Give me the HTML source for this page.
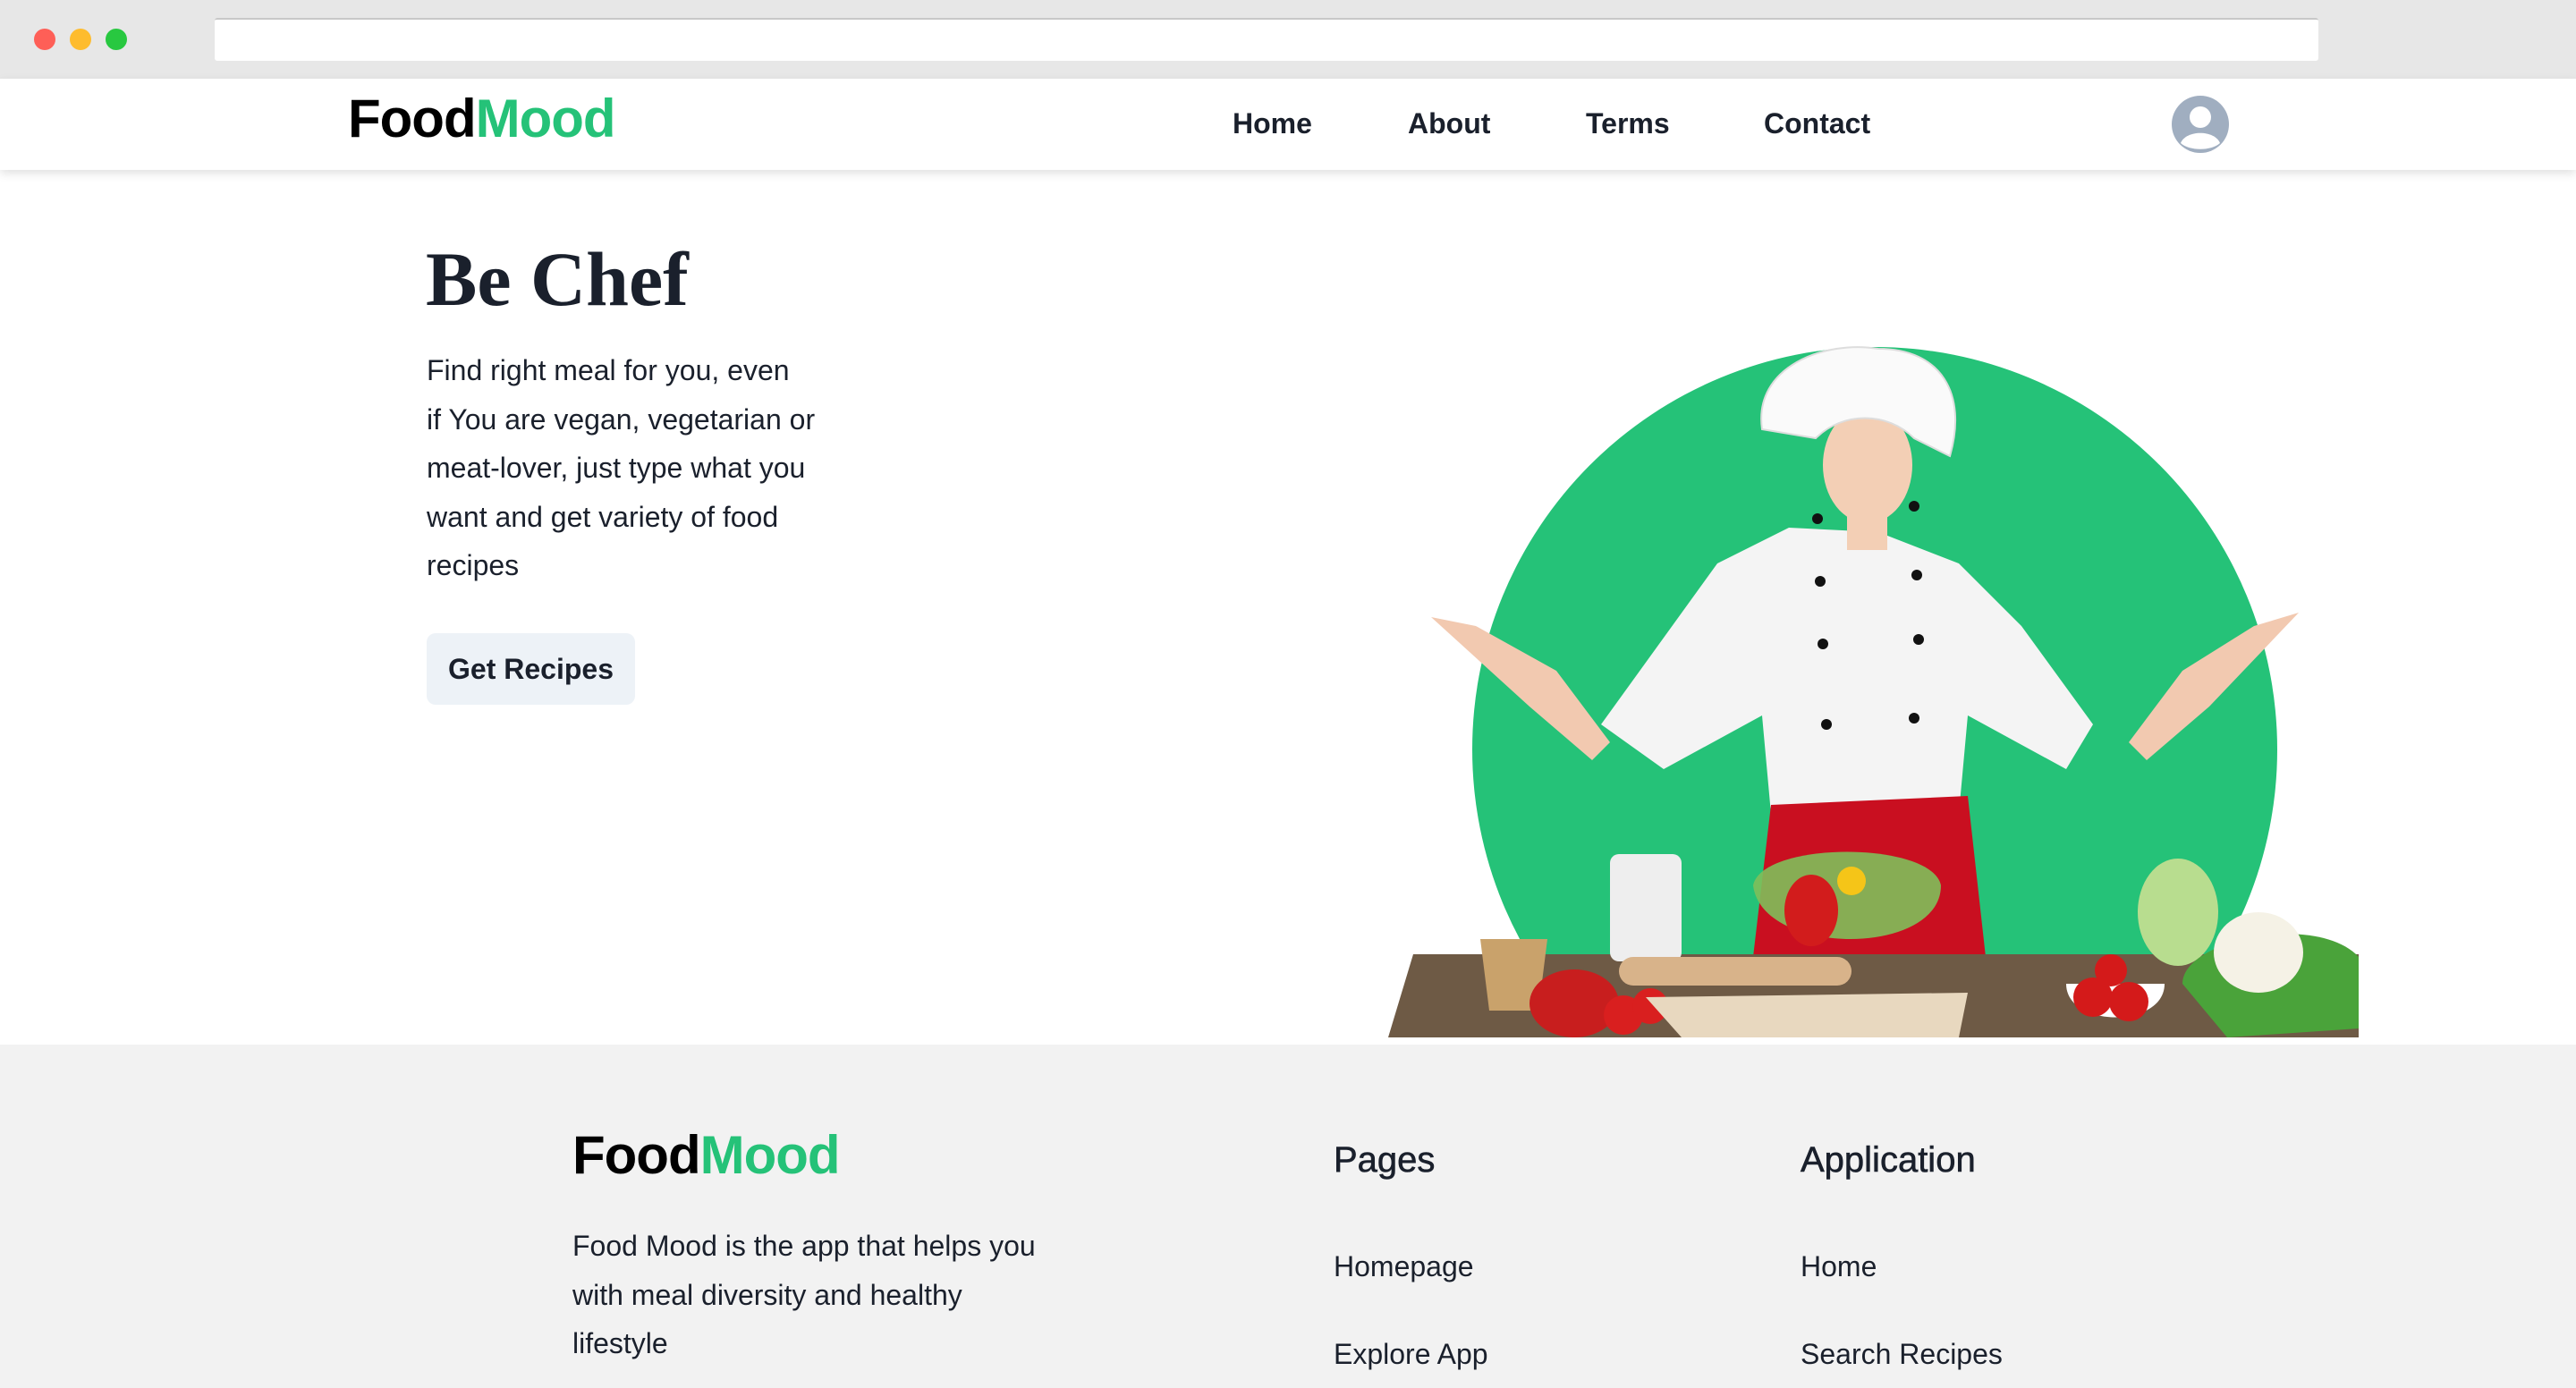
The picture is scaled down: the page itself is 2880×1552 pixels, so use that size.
<!DOCTYPE html>
<html><head><meta charset="utf-8"><style>
*{margin:0;padding:0;box-sizing:border-box}
body{width:2880px;height:1552px;overflow:hidden;background:#fff;font-family:"Liberation Sans",sans-serif;position:relative;color:#1a202c}
.abs{position:absolute}
.chrome{left:0;top:0;width:2880px;height:88px;background:#e7e7e7}
.dot{width:24px;height:24px;border-radius:50%;top:32px}
.addr{left:240px;top:20px;width:2352px;height:48px;background:#fff;border-top:2px solid #c8c8c8;border-radius:3px}
.nav{left:0;top:88px;width:2880px;height:102px;background:#fff;box-shadow:0 4px 10px rgba(0,0,0,.12);z-index:2}
.logo{font-weight:bold;font-size:60px;letter-spacing:-1px;color:#000}
.logo span{color:#25c278}
.nl{font-size:32px;top:120px;color:#1a202c;z-index:3;font-weight:bold}
.p{font-size:32px;line-height:54.5px;color:#1a202c}
.footer{left:0;top:1168px;width:2880px;height:384px;background:#f2f2f2}
.fh{font-size:40px;color:#1a202c;top:1275px;-webkit-text-stroke:0.6px #1a202c}
</style></head><body>
<div class="abs chrome"></div>
<div class="abs dot" style="left:38px;background:#fe5f57"></div>
<div class="abs dot" style="left:78px;background:#febc2e"></div>
<div class="abs dot" style="left:118px;background:#28c840"></div>
<div class="abs addr"></div>
<div class="abs nav"></div>
<div class="abs logo" style="left:389px;top:98px;z-index:3">Food<span>Mood</span></div>
<div class="abs nl" style="left:1378px">Home</div>
<div class="abs nl" style="left:1574px">About</div>
<div class="abs nl" style="left:1773px">Terms</div>
<div class="abs nl" style="left:1972px">Contact</div>
<svg class="abs" style="left:2426px;top:105px;z-index:3" width="68" height="68" viewBox="0 0 68 68"><circle cx="34" cy="34" r="32" fill="#a0aec0"/><circle cx="34" cy="26" r="12" fill="#fff"/><path d="M12 55 C18 40 50 40 56 55 C46 64 22 64 12 55Z" fill="#fff"/></svg>

<div class="abs" style="left:476px;top:262px;font-family:'Liberation Serif',serif;font-weight:bold;font-size:86px;color:#1a202c">Be Chef</div>
<div class="abs p" style="left:477px;top:387px;white-space:nowrap">Find right meal for you, even<br>if You are vegan, vegetarian or<br>meat-lover, just type what you<br>want and get variety of food<br>recipes</div>
<div class="abs" style="left:477px;top:708px;width:233px;height:80px;background:#edf2f7;border-radius:10px;font-size:32px;font-weight:bold;line-height:80px;text-align:center;color:#1a202c">Get Recipes</div>

<svg class="abs" style="left:1540px;top:370px" width="1120" height="790" viewBox="0 0 1120 790">
<circle cx="556" cy="468" r="450" fill="#25c278"/>
<path d="M60 320 L110 330 L200 380 L260 460 L240 480 L170 420 Z" fill="#f2c9b0"/>
<path d="M1030 315 L980 330 L900 380 L840 460 L860 480 L930 420 Z" fill="#f2c9b0"/>
<path d="M250 440 L380 260 L460 220 L560 225 L650 260 L720 330 L800 440 L770 490 L660 430 L650 540 L440 540 L430 430 L320 490 Z" fill="#f4f4f4"/>
<path d="M440 530 L660 520 L680 700 L420 700 Z" fill="#c90f20"/>
<ellipse cx="548" cy="150" rx="50" ry="65" fill="#f3cfb5"/>
<rect x="525" y="200" width="45" height="45" fill="#f3cfb5"/>
<path d="M430 110 C420 40 500 10 560 20 C630 20 660 70 640 140 L600 120 C570 90 520 90 490 120 Z" fill="#fafafa" stroke="#ddd" stroke-width="2"/>
<g fill="#111"><circle cx="492" cy="210" r="6"/><circle cx="600" cy="196" r="6"/><circle cx="495" cy="280" r="6"/><circle cx="603" cy="273" r="6"/><circle cx="498" cy="350" r="6"/><circle cx="605" cy="345" r="6"/><circle cx="502" cy="440" r="6"/><circle cx="600" cy="433" r="6"/></g>
<path d="M40 697 L1097 697 L1097 790 L12 790 Z" fill="#6e5a45"/>
<rect x="260" y="585" width="80" height="120" rx="10" fill="#eee"/>
<path d="M115 680 L190 680 L180 760 L125 760 Z" fill="#c9a26b"/>
<ellipse cx="220" cy="752" rx="50" ry="38" fill="#c81e1e"/>
<circle cx="275" cy="765" r="22" fill="#d91f1f"/><circle cx="305" cy="755" r="20" fill="#d91f1f"/>
<path d="M300 745 L660 740 L650 790 L340 790 Z" fill="#e8d8bf"/>
<rect x="270" y="700" width="260" height="32" rx="16" fill="#d8b38a"/>
<path d="M420 620 C430 570 620 570 630 620 C630 700 430 700 420 620Z" fill="#7fbf5a" opacity=".9"/>
<ellipse cx="485" cy="648" rx="30" ry="40" fill="#d21c1c"/>
<circle cx="530" cy="615" r="16" fill="#f5c518"/>
<path d="M770 730 L880 730 C880 780 770 780 770 730Z" fill="#fff"/>
<circle cx="800" cy="745" r="22" fill="#d41a1a"/><circle cx="840" cy="750" r="22" fill="#d41a1a"/><circle cx="820" cy="715" r="18" fill="#d41a1a"/>
<ellipse cx="895" cy="650" rx="45" ry="60" fill="#b8dd8f"/>
<path d="M900 730 C900 680 1050 650 1097 700 L1097 780 L950 790 Z" fill="#4aa33a"/>
<ellipse cx="985" cy="695" rx="50" ry="45" fill="#f5f2e6"/>
</svg>

<div class="abs footer"></div>
<div class="abs logo" style="left:640px;top:1257px">Food<span>Mood</span></div>
<div class="abs p" style="left:640px;top:1366px;width:540px">Food Mood is the app that helps you with meal diversity and healthy lifestyle</div>
<div class="abs fh" style="left:1491px">Pages</div>
<div class="abs fh" style="left:2013px">Application</div>
<div class="abs p" style="left:1491px;top:1389px">Homepage</div>
<div class="abs p" style="left:1491px;top:1487px">Explore App</div>
<div class="abs p" style="left:2013px;top:1389px">Home</div>
<div class="abs p" style="left:2013px;top:1487px">Search Recipes</div>
</body></html>
